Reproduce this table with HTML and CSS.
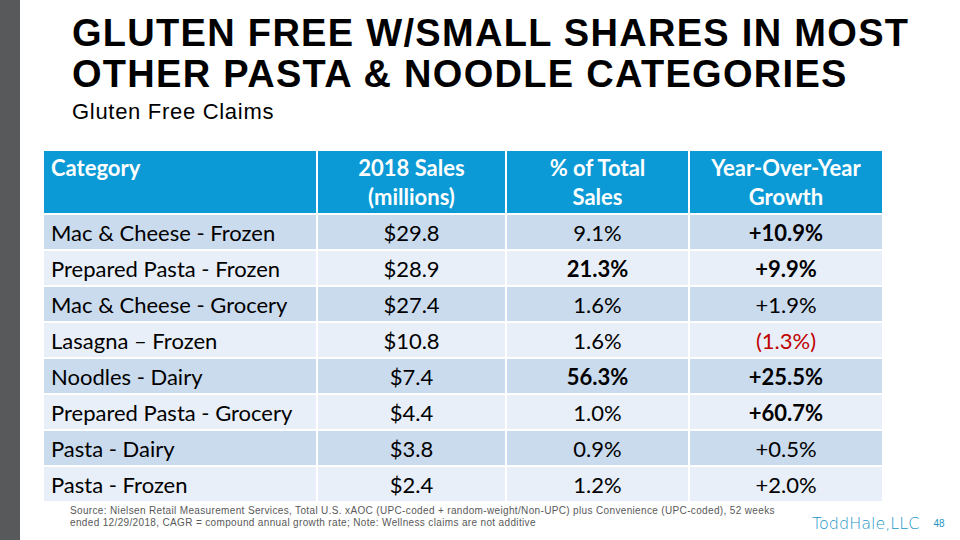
FILE: index.html
```html
<!DOCTYPE html>
<html>
<head>
<meta charset="utf-8">
<link rel="stylesheet" href="styles.css">
</head>
<body>
<div class="slide">
  <div class="bar"></div>
  <div class="main">
    <h1 class="title">GLUTEN FREE W/SMALL SHARES IN MOST<br>OTHER PASTA &amp; NOODLE CATEGORIES</h1>
    <div class="subtitle">Gluten Free Claims</div>
    <div class="grid">
      <div class="hd hd-left">Category</div>
      <div class="hd">2018 Sales<br>(millions)</div>
      <div class="hd">% of Total<br>Sales</div>
      <div class="hd">Year-Over-Year<br>Growth</div>

      <div class="c dk left">Mac &amp; Cheese - Frozen</div>
      <div class="c dk">$29.8</div>
      <div class="c dk">9.1%</div>
      <div class="c dk b">+10.9%</div>

      <div class="c lt left">Prepared Pasta - Frozen</div>
      <div class="c lt">$28.9</div>
      <div class="c lt b">21.3%</div>
      <div class="c lt b">+9.9%</div>

      <div class="c dk left">Mac &amp; Cheese - Grocery</div>
      <div class="c dk">$27.4</div>
      <div class="c dk">1.6%</div>
      <div class="c dk">+1.9%</div>

      <div class="c lt left">Lasagna – Frozen</div>
      <div class="c lt">$10.8</div>
      <div class="c lt">1.6%</div>
      <div class="c lt neg">(1.3%)</div>

      <div class="c dk left">Noodles - Dairy</div>
      <div class="c dk">$7.4</div>
      <div class="c dk b">56.3%</div>
      <div class="c dk b">+25.5%</div>

      <div class="c lt left">Prepared Pasta - Grocery</div>
      <div class="c lt">$4.4</div>
      <div class="c lt">1.0%</div>
      <div class="c lt b">+60.7%</div>

      <div class="c dk left">Pasta - Dairy</div>
      <div class="c dk">$3.8</div>
      <div class="c dk">0.9%</div>
      <div class="c dk">+0.5%</div>

      <div class="c lt left">Pasta - Frozen</div>
      <div class="c lt">$2.4</div>
      <div class="c lt">1.2%</div>
      <div class="c lt">+2.0%</div>
    </div>
    <div class="footer">
      <p class="source">Source: Nielsen Retail Measurement Services, Total U.S. xAOC (UPC-coded + random-weight/Non-UPC) plus Convenience (UPC-coded), 52 weeks ended 12/29/2018, CAGR = compound annual growth rate; Note: Wellness claims are not additive</p>
      <div class="logo">ToddHale,LLC</div>
      <div class="page">48</div>
    </div>
  </div>
</div>
</body>
</html>
```

FILE: styles.css
```css
html, body {
  margin: 0;
  padding: 0;
  background: #ffffff;
}

.slide {
  display: flex;
  width: 960px;
  height: 540px;
  overflow: hidden;
}

.bar {
  width: 20px;
  flex: 0 0 20px;
  background: #58595b;
}

.main {
  flex: 1;
  display: flex;
  flex-direction: column;
}

.title {
  margin: 13px 0 0 52px;
  font-family: "Liberation Sans", Arial, sans-serif;
  font-weight: bold;
  font-size: 38px;
  line-height: 41px;
  letter-spacing: 1.3px;
  white-space: nowrap;
  color: #000000;
}

.subtitle {
  margin: 5px 0 0 52px;
  font-family: "Liberation Sans", Arial, sans-serif;
  font-size: 22px;
  line-height: 24px;
  letter-spacing: 0.7px;
  color: #000000;
}

.grid {
  margin: 27px 0 0 24px;
  display: grid;
  grid-template-columns: 272px 187px 181px 192px;
  grid-template-rows: 62px repeat(8, 34px);
  column-gap: 2px;
  row-gap: 2px;
  font-family: Lato, "Open Sans", sans-serif;
  font-size: 22px;
  color: #000000;
}

.hd {
  background: #0b9ad5;
  color: #ffffff;
  font-weight: bold;
  text-align: center;
  line-height: 29px;
  padding-top: 2px;
}

.hd-left {
  text-align: left;
  padding-left: 7px;
}

.c {
  display: flex;
  align-items: center;
  justify-content: center;
}

.c.left {
  justify-content: flex-start;
  padding-left: 7px;
}

.dk {
  background: #cbdbee;
}

.lt {
  background: #e8eff8;
}

.b {
  font-weight: bold;
}

.neg {
  color: #c00000;
}

.footer {
  display: flex;
  align-items: flex-end;
  margin-top: 4px;
}

.source {
  margin: 0 0 0 50px;
  width: 708px;
  flex: 0 0 708px;
  font-family: "Liberation Sans", Arial, sans-serif;
  font-size: 10px;
  line-height: 12px;
  letter-spacing: 0.35px;
  color: #595959;
}

.logo {
  margin-left: 34px;
  margin-bottom: -4px;
  font-family: "DejaVu Sans", sans-serif;
  font-weight: 200;
  font-size: 16px;
  line-height: 18px;
  color: #2196c6;
}

.page {
  margin-left: 14px;
  margin-bottom: -2px;
  font-family: "Liberation Sans", Arial, sans-serif;
  font-size: 10px;
  line-height: 14px;
  color: #2196c6;
}
```
